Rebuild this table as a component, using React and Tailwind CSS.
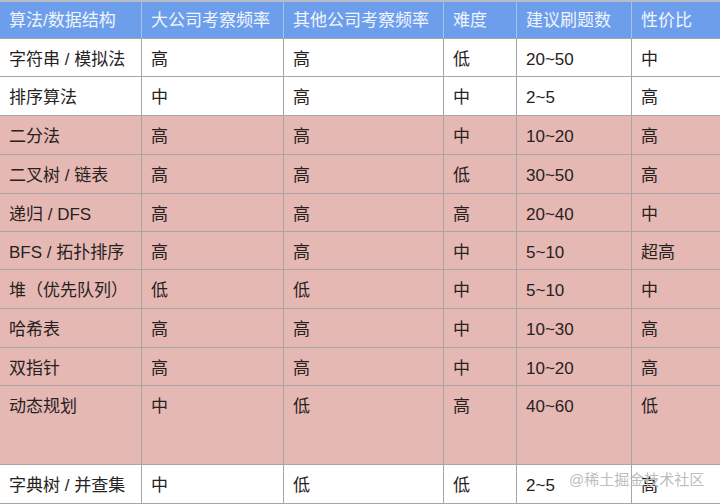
const font = { fontFamily: '"Liberation Sans", "Noto Sans CJK SC", sans-serif' };

const headers = ['算法/数据结构', '大公司考察频率', '其他公司考察频率', '难度', '建议刷题数', '性价比'];

const rows = [
  { cells: ['字符串 / 模拟法', '高', '高', '低', '20~50', '中'], pink: false, h: 'h-[38px]' },
  { cells: ['排序算法', '中', '高', '中', '2~5', '高'], pink: false, h: 'h-[39px]' },
  { cells: ['二分法', '高', '高', '中', '10~20', '高'], pink: true, h: 'h-[39px]' },
  { cells: ['二叉树 / 链表', '高', '高', '低', '30~50', '高'], pink: true, h: 'h-[39px]' },
  { cells: ['递归 / DFS', '高', '高', '高', '20~40', '中'], pink: true, h: 'h-[38px]' },
  { cells: ['BFS / 拓扑排序', '高', '高', '中', '5~10', '超高'], pink: true, h: 'h-[38px]' },
  { cells: ['堆（优先队列）', '低', '低', '中', '5~10', '中'], pink: true, h: 'h-[39px]' },
  { cells: ['哈希表', '高', '高', '中', '10~30', '高'], pink: true, h: 'h-[39px]' },
  { cells: ['双指针', '高', '高', '中', '10~20', '高'], pink: true, h: 'h-[38px]' },
  { cells: ['动态规划', '中', '低', '高', '40~60', '低'], pink: true, h: 'h-[79px]' },
  { cells: ['字典树 / 并查集', '中', '低', '低', '2~5', '高'], pink: false, h: 'h-[39px]' },
];

const widths = ['w-[142px]', 'w-[142px]', 'w-[160px]', 'w-[73px]', 'w-[115px]', 'w-[88px]'];

function Row({ cells, pink, h }) {
  return (
    <div className={`flex ${h} ${pink ? 'bg-[#e6b8b3]' : 'bg-white'} border-b border-[#a6a6a6]`}>
      {cells.map((c, i) => (
        <div
          key={i}
          className={`${widths[i]} shrink-0 pl-[9px] pt-[10px] text-[17px] leading-[22px] text-[#262222] ${
            i < 5 ? 'border-r border-[#a6a6a6]' : ''
          }`}
        >
          {c}
        </div>
      ))}
    </div>
  );
}

export default function App() {
  return (
    <div className="relative h-[504px] w-[720px] overflow-hidden bg-white" style={font}>
      <div className="flex h-[39px] border-t-2 border-b border-t-[#b7bcc6] border-b-[#a6a6a6] bg-[#6d9eeb]">
        {headers.map((t, i) => (
          <div
            key={t}
            className={`${widths[i]} shrink-0 pl-[9px] pt-[8px] text-[17px] leading-[22px] text-white/90 ${
              i < 5 ? 'border-r border-[#a9c2ea]' : ''
            }`}
          >
            {t}
          </div>
        ))}
      </div>
      {rows.map((r, i) => (
        <Row key={i} {...r} />
      ))}
      <div className="absolute left-[569px] top-[470px] text-[15px] leading-[20px] text-[#bdbdbd]">
        @稀土掘金技术社区
      </div>
    </div>
  );
}
